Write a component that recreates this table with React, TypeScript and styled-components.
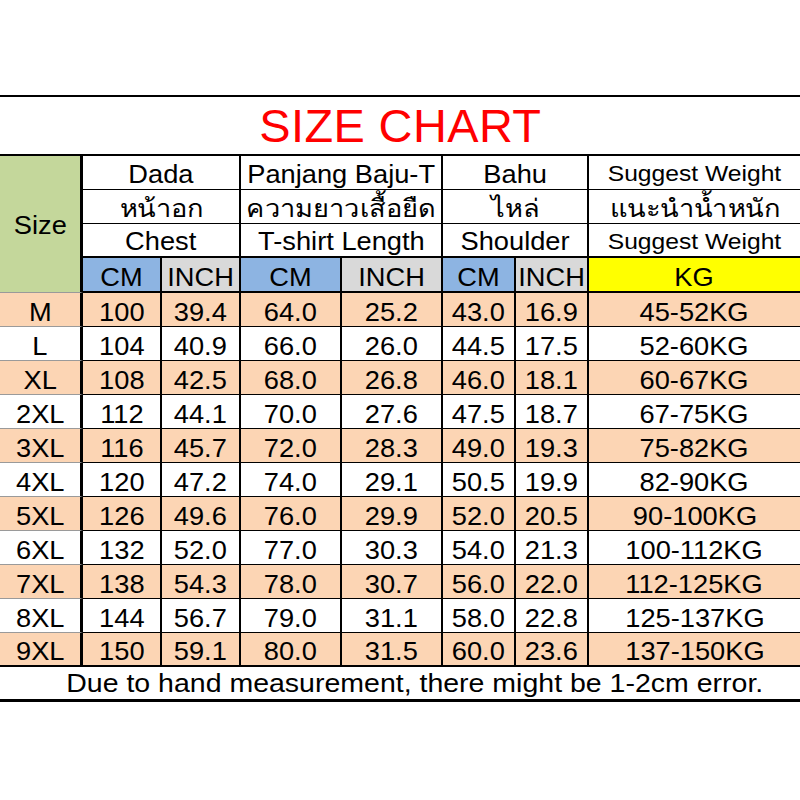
import { createGlobalStyle } from "styled-components";
import styled from "styled-components";

const GlobalStyle = createGlobalStyle`
    html, body {
        margin: 0;
        padding: 0;
        background: #ffffff;
    }
    body {
        font-family: "Liberation Sans", Arial, "Noto Sans", sans-serif;
        color: #000;
    }
`;

const Page = styled.div`
    width: 800px;
    height: 800px;
    padding-top: 95px;
    box-sizing: border-box;
    background: #fff;
`;

const Chart = styled.div`
    display: grid;
    grid-template-columns: 83px 79px 79px 101px 101px 73px 73px 211px;
    grid-template-rows: 61px 34px 34px 34px 35px repeat(11, 34px) 35px;
`;

const Title = styled.div`
    grid-column: 1 / -1;
    display: flex;
    align-items: center;
    justify-content: center;
    border-top: 2px solid #000;
    border-bottom: 2px solid #000;
    box-sizing: border-box;
    color: #ff0000;
    font-size: 46px;
    letter-spacing: 0.4px;
`;

const Cell = styled.div<{
    $bg?: string;
    $span?: number;
    $rows?: number;
    $right?: number;
    $bottom?: number;
    $bottomColor?: string;
    $size?: number;
    $drop?: number;
}>`
    grid-column: span ${(p) => p.$span ?? 1};
    grid-row: span ${(p) => p.$rows ?? 1};
    display: flex;
    align-items: center;
    justify-content: center;
    box-sizing: border-box;
    padding-top: ${(p) => p.$drop ?? 0}px;
    background: ${(p) => p.$bg ?? "#ffffff"};
    border-right: ${(p) => p.$right ?? 2}px solid #000;
    border-bottom: ${(p) => p.$bottom ?? 1}px solid ${(p) => p.$bottomColor ?? "#000"};
    font-size: ${(p) => p.$size ?? 25}px;
    white-space: nowrap;
    overflow: hidden;
`;

const Text = styled.span<{ $stretch?: number }>`
    display: inline-block;
    transform: scaleX(${(p) => p.$stretch ?? 1.09});
`;

const Note = styled.div`
    grid-column: 1 / -1;
    display: flex;
    align-items: center;
    justify-content: center;
    box-sizing: border-box;
    padding-left: 30px;
    border-bottom: 3px solid #000;
    font-size: 25px;
    white-space: nowrap;
`;

const GREEN = "#c4d79b";
const BLUE = "#8db4e2";
const GRAY = "#d9d9d9";
const PEACH = "#fcd5b4";
const YELLOW = "#ffff00";

const rows = [
    ["M", "100", "39.4", "64.0", "25.2", "43.0", "16.9", "45-52KG"],
    ["L", "104", "40.9", "66.0", "26.0", "44.5", "17.5", "52-60KG"],
    ["XL", "108", "42.5", "68.0", "26.8", "46.0", "18.1", "60-67KG"],
    ["2XL", "112", "44.1", "70.0", "27.6", "47.5", "18.7", "67-75KG"],
    ["3XL", "116", "45.7", "72.0", "28.3", "49.0", "19.3", "75-82KG"],
    ["4XL", "120", "47.2", "74.0", "29.1", "50.5", "19.9", "82-90KG"],
    ["5XL", "126", "49.6", "76.0", "29.9", "52.0", "20.5", "90-100KG"],
    ["6XL", "132", "52.0", "77.0", "30.3", "54.0", "21.3", "100-112KG"],
    ["7XL", "138", "54.3", "78.0", "30.7", "56.0", "22.0", "112-125KG"],
    ["8XL", "144", "56.7", "79.0", "31.1", "58.0", "22.8", "125-137KG"],
    ["9XL", "150", "59.1", "80.0", "31.5", "60.0", "23.6", "137-150KG"],
];

const headers = [
    ["Dada", "Panjang Baju-T", "Bahu", "Suggest Weight"],
    ["หน้าอก", "ความยาวเสื้อยืด", "ไหล่", "แนะนำน้ำหนัก"],
    ["Chest", "T-shirt Length", "Shoulder", "Suggest Weight"],
];

const units = [
    { label: "CM", bg: BLUE },
    { label: "INCH", bg: GRAY },
    { label: "CM", bg: BLUE },
    { label: "INCH", bg: GRAY },
    { label: "CM", bg: BLUE },
    { label: "INCH", bg: GRAY },
];

export default function App() {
    return (
        <Page>
            <GlobalStyle />
            <Chart>
                <Title>
                    <Text $stretch={1.02}>SIZE CHART</Text>
                </Title>

                <Cell $rows={4} $bg={GREEN} $right={3} $bottomColor="#9a9a9a" $drop={3}>
                    <Text>Size</Text>
                </Cell>
                {headers.map((line, r) =>
                    line.map((label, c) => (
                        <Cell
                            key={`h${r}-${c}`}
                            $span={c === 3 ? 1 : 2}
                            $right={c === 3 ? 0 : 2}
                            $bottom={r === 2 ? 2 : 1}
                            $size={c === 3 && r !== 1 ? 22 : 25}
                            $drop={3}
                        >
                            <Text $stretch={c === 3 && r !== 1 ? 1.12 : 1.09}>{label}</Text>
                        </Cell>
                    ))
                )}

                {units.map((u, i) => (
                    <Cell key={`u${i}`} $bg={u.bg} $bottom={2} $drop={5}>
                        <Text>{u.label}</Text>
                    </Cell>
                ))}
                <Cell $bg={YELLOW} $right={0} $bottom={2} $drop={5}>
                    <Text>KG</Text>
                </Cell>

                {rows.map((row, r) =>
                    row.map((value, c) => (
                        <Cell
                            key={`r${r}-${c}`}
                            $bg={r % 2 === 0 ? PEACH : "#ffffff"}
                            $right={c === 0 ? 3 : c === 7 ? 0 : 2}
                            $bottom={r === rows.length - 1 ? 2 : 1}
                            $bottomColor={c === 0 && r !== rows.length - 1 ? "#9a9a9a" : "#000"}
                            $drop={5}
                        >
                            <Text>{value}</Text>
                        </Cell>
                    ))
                )}

                <Note>
                    <Text $stretch={1.14}>Due to hand measurement, there might be 1-2cm error.</Text>
                </Note>
            </Chart>
        </Page>
    );
}
